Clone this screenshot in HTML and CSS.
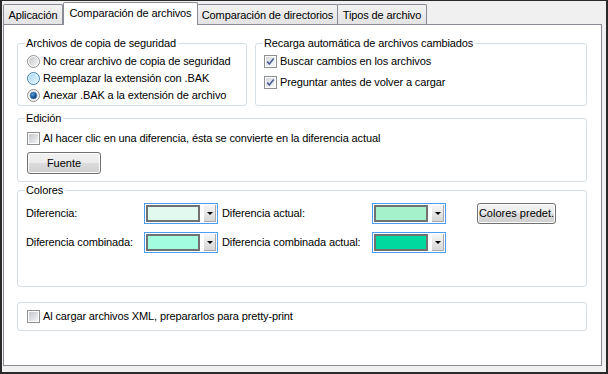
FILE: index.html
```html
<!DOCTYPE html>
<html lang="es">
<head>
<meta charset="utf-8">
<title>Opciones</title>
<link rel="stylesheet" href="styles.css">
</head>
<body>
<svg class="defs" width="0" height="0" aria-hidden="true">
  <defs>
    <linearGradient id="boxg" x1="0" y1="0" x2="1" y2="1">
      <stop offset="0" stop-color="#c3c6cb"/>
      <stop offset="1" stop-color="#f4f4f5"/>
    </linearGradient>
    <linearGradient id="boxchk" x1="0" y1="0" x2="1" y2="1">
      <stop offset="0" stop-color="#d6d9de"/>
      <stop offset="1" stop-color="#f7f7f8"/>
    </linearGradient>
    <linearGradient id="rg" x1="0" y1="0" x2="1" y2="1">
      <stop offset="0" stop-color="#c4c6c8"/>
      <stop offset="1" stop-color="#f6f6f6"/>
    </linearGradient>
    <linearGradient id="rh" x1="0" y1="0" x2="1" y2="1">
      <stop offset="0" stop-color="#a9d8f3"/>
      <stop offset="1" stop-color="#e6f5fd"/>
    </linearGradient>
    <radialGradient id="rdot" cx="0.4" cy="0.35" r="0.7">
      <stop offset="0" stop-color="#5fa3de"/>
      <stop offset="0.55" stop-color="#1d5a96"/>
      <stop offset="1" stop-color="#0d2f57"/>
    </radialGradient>
  </defs>
</svg>
<div class="window">
  <div class="tabs">
    <div class="tab t-app">Aplicación</div>
    <div class="tab t-files active">Comparación de archivos</div>
    <div class="tab t-dirs">Comparación de directorios</div>
    <div class="tab t-types">Tipos de archivo</div>
  </div>
  <div class="panel">
    <div class="top-row">
      <fieldset class="group g-backup">
        <legend>Archivos de copia de seguridad</legend>
        <div class="opt">
          <svg class="radio" width="13" height="13" viewBox="0 0 13 13"><circle cx="6.5" cy="6.5" r="6" fill="#fff" stroke="#8e8f8f"/><circle cx="6.5" cy="6.5" r="4.6" fill="url(#rg)"/></svg>
          <span>No crear archivo de copia de seguridad</span>
        </div>
        <div class="opt">
          <svg class="radio" width="13" height="13" viewBox="0 0 13 13"><circle cx="6.5" cy="6.5" r="6" fill="#e9f6fd" stroke="#3c7fb1"/><circle cx="6.5" cy="6.5" r="4.6" fill="url(#rh)"/></svg>
          <span>Reemplazar la extensión con .BAK</span>
        </div>
        <div class="opt">
          <svg class="radio" width="13" height="13" viewBox="0 0 13 13"><circle cx="6.5" cy="6.5" r="6" fill="#f4f4f4" stroke="#8e8f8f"/><circle cx="6.5" cy="6.5" r="3.4" fill="url(#rdot)" stroke="#4f86bd" stroke-width="0.8"/></svg>
          <span>Anexar .BAK a la extensión de archivo</span>
        </div>
      </fieldset>
      <fieldset class="group g-reload">
        <legend>Recarga automática de archivos cambiados</legend>
        <div class="opt chk-row">
          <svg class="cb" width="13" height="13" viewBox="0 0 13 13"><rect x="0.5" y="0.5" width="12" height="12" fill="#fff" stroke="#8e8f8f"/><rect x="2" y="2" width="9" height="9" fill="url(#boxchk)"/><path d="M3.2 6.4l2.1 2.6 4.4-5.6" fill="none" stroke="#4b5f98" stroke-width="1.6"/></svg>
          <span>Buscar cambios en los archivos</span>
        </div>
        <div class="opt chk-row">
          <svg class="cb" width="13" height="13" viewBox="0 0 13 13"><rect x="0.5" y="0.5" width="12" height="12" fill="#fff" stroke="#8e8f8f"/><rect x="2" y="2" width="9" height="9" fill="url(#boxchk)"/><path d="M3.2 6.4l2.1 2.6 4.4-5.6" fill="none" stroke="#4b5f98" stroke-width="1.6"/></svg>
          <span>Preguntar antes de volver a cargar</span>
        </div>
      </fieldset>
    </div>

    <fieldset class="group g-edit">
      <legend>Edición</legend>
      <div class="opt edit-row">
        <svg class="cb" width="13" height="13" viewBox="0 0 13 13"><rect x="0.5" y="0.5" width="12" height="12" fill="#fff" stroke="#8e8f8f"/><rect x="2" y="2" width="9" height="9" fill="url(#boxg)"/></svg>
        <span>Al hacer clic en una diferencia, ésta se convierte en la diferencia actual</span>
      </div>
      <button class="btn btn-font" type="button">Fuente</button>
    </fieldset>

    <fieldset class="group g-colors">
      <legend>Colores</legend>
      <div class="color-grid">
        <span class="clabel">Diferencia:</span>
        <div class="combo"><span class="swatch sw-diff"></span><span class="drop"><span class="arrow"></span></span></div>
        <span class="clabel">Diferencia actual:</span>
        <div class="combo"><span class="swatch sw-cur"></span><span class="drop"><span class="arrow"></span></span></div>
        <button class="btn btn-defaults" type="button">Colores predet.</button>

        <span class="clabel">Diferencia combinada:</span>
        <div class="combo"><span class="swatch sw-comb"></span><span class="drop"><span class="arrow"></span></span></div>
        <span class="clabel">Diferencia combinada actual:</span>
        <div class="combo"><span class="swatch sw-comb-cur"></span><span class="drop"><span class="arrow"></span></span></div>
        <span></span>
      </div>
    </fieldset>

    <div class="group g-xml">
      <div class="opt xml-row">
        <svg class="cb" width="13" height="13" viewBox="0 0 13 13"><rect x="0.5" y="0.5" width="12" height="12" fill="#fff" stroke="#8e8f8f"/><rect x="2" y="2" width="9" height="9" fill="url(#boxg)"/></svg>
        <span>Al cargar archivos XML, prepararlos para pretty-print</span>
      </div>
    </div>
  </div>
</div>
</body>
</html>
```

FILE: styles.css
```css
* { box-sizing: border-box; }

html, body {
  margin: 0;
  padding: 0;
}

body {
  width: 608px;
  height: 374px;
  overflow: hidden;
  background: #f0f0f0;
  color: #000;
  font-family: "Liberation Sans", Arial, sans-serif;
  font-size: 11px;
  line-height: 13px;
  letter-spacing: -0.12px;
}

.defs {
  display: block;
  width: 0;
  height: 0;
}

.window {
  width: 608px;
  height: 374px;
  display: flex;
  flex-direction: column;
  background: #f0f0f0;
  border: 2px solid #2a2a2a;
  border-top-width: 1px;
}

/* ---- tabs ---- */
.tabs {
  flex: none;
  height: 23px;
  display: flex;
  align-items: flex-end;
  padding-left: 1px;
}

.tab {
  height: 20px;
  padding-top: 4px;
  border: 1px solid #898c95;
  border-bottom: none;
  border-radius: 2px 2px 0 0;
  background: linear-gradient(#f3f3f3, #e3e3e3);
  text-align: center;
  white-space: nowrap;
}

.tab.active {
  height: 23px;
  margin-bottom: -1px;
  padding-top: 4px;
  background: #fff;
  position: relative;
  z-index: 2;
}

.t-app { width: 60px; }
.t-files { width: 135px; }
.t-dirs { width: 141px; margin-left: -1px; }
.t-types { width: 90px; margin-left: -1px; }

/* ---- panel ---- */
.panel {
  flex: 1;
  margin: 0 4px 6px 1px;
  padding: 12px 14px 0 13px;
  background: #fff;
  border: 1px solid #898c95;
}

.group {
  margin: 0;
  min-width: 0;
  padding: 0 8px;
  border: 1px solid #d5dfe5;
  border-radius: 3px;
}

.group legend {
  padding: 0 2px 0 1px;
  margin-left: -1px;
  line-height: 13px;
}

.top-row {
  display: flex;
  gap: 8px;
}

.g-backup {
  width: 230px;
  flex: none;
  padding-top: 3px;
  padding-bottom: 1px;
}

.g-reload {
  flex: 1;
  padding-top: 1px;
}

.opt {
  display: flex;
  align-items: center;
  gap: 3px;
  height: 17px;
  white-space: nowrap;
}

.radio,
.cb {
  flex: none;
  display: block;
  margin-left: 1px;
}

.chk-row {
  height: 21px;
}

.chk-row .cb {
  margin-left: 0;
}

.g-edit {
  margin-top: 6px;
  padding-top: 4px;
  padding-bottom: 7px;
}

.edit-row {
  height: 18px;
}

.btn {
  display: block;
  font: inherit;
  color: #000;
  padding: 0;
  border: 1px solid #707070;
  border-radius: 3px;
  background: linear-gradient(#f2f2f2 0%, #ebebeb 50%, #dddddd 50%, #cfcfcf 100%);
  box-shadow: inset 0 0 0 1px #fcfcfc;
  text-align: center;
}

.btn-font {
  width: 74px;
  height: 22px;
  margin: 5px 0 0 1px;
}

.g-colors {
  margin-top: 2px;
  padding-top: 6px;
  padding-bottom: 33px;
}

.color-grid {
  display: grid;
  grid-template-columns: 118px 78px 150px 105px 79px;
  grid-auto-rows: 21px;
  row-gap: 8px;
  align-items: center;
}

.clabel {
  white-space: nowrap;
}

.combo {
  width: 74px;
  height: 21px;
  display: flex;
  align-items: center;
  padding: 0 1px;
  background: #fff;
  border: 1px solid #4c9cf0;
}

.swatch {
  width: 54px;
  height: 17px;
  border: 2px solid #717171;
}

.sw-diff { background: #e1f9ee; }
.sw-cur { background: #a5f1cb; }
.sw-comb { background: #a2fde0; }
.sw-comb-cur { background: #00d89f; }

.drop {
  width: 12px;
  height: 17px;
  margin-left: 4px;
  display: flex;
  align-items: center;
  justify-content: center;
  background: linear-gradient(#f6f6f6, #d6d6d6);
  border-right: 1px solid #a9a9a9;
  border-bottom: 1px solid #a9a9a9;
}

.arrow {
  width: 0;
  height: 0;
  border-left: 3px solid transparent;
  border-right: 3px solid transparent;
  border-top: 3px solid #000;
  margin-top: 1px;
}

.btn-defaults {
  width: 79px;
  height: 21px;
}

.g-xml {
  margin-top: 15px;
  padding-top: 5px;
  padding-bottom: 5px;
}
```
